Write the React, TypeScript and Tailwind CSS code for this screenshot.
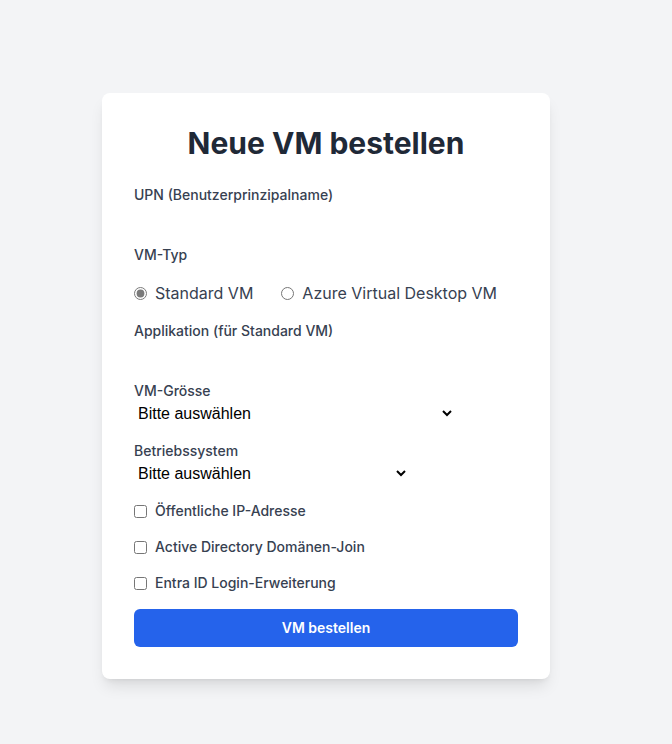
import React from "react";

export default function App() {
  const font = { fontFamily: "Inter, 'Noto Sans', sans-serif" };
  return (
    <div className="min-h-[744px] bg-[#f3f4f6] pt-[93px] pl-[102px]" style={font}>
      <div className="w-[448px] bg-white rounded-lg shadow-lg p-8">
        <h1 className="text-3xl font-bold text-[#1f2937] text-center mb-6">Neue VM bestellen</h1>

        <div className="mb-4">
          <label className="block text-sm font-medium text-[#374151]">UPN (Benutzerprinzipalname)</label>
          <input type="text" className="block w-full h-6 outline-none" />
        </div>

        <div className="mb-4">
          <label className="block text-sm font-medium text-[#374151] mb-4">VM-Typ</label>
          <div className="flex items-center text-base text-[#374151]">
            <label className="inline-flex items-center">
              <input type="radio" name="vmtyp" defaultChecked className="w-[13px] h-[13px] accent-[#7a7a7a]" />
              <span className="ml-2">Standard VM</span>
            </label>
            <label className="inline-flex items-center ml-7">
              <input type="radio" name="vmtyp" className="w-[13px] h-[13px] accent-[#7a7a7a]" />
              <span className="ml-2">Azure Virtual Desktop VM</span>
            </label>
          </div>
        </div>

        <div className="mb-4">
          <label className="block text-sm font-medium text-[#374151]">Applikation (für Standard VM)</label>
          <input type="text" className="block w-full h-6 outline-none" />
        </div>

        <div className="mb-4">
          <label className="block text-sm font-medium text-[#374151]">VM-Grösse</label>
          <select
            className="block h-6 w-[321px] text-base text-black"
            style={{ fontFamily: "'Liberation Sans', Arial, sans-serif" }}
          >
            <option>Bitte auswählen</option>
          </select>
        </div>

        <div className="mb-4">
          <label className="block text-sm font-medium text-[#374151]">Betriebssystem</label>
          <select
            className="block h-6 w-[275px] text-base text-black"
            style={{ fontFamily: "'Liberation Sans', Arial, sans-serif" }}
          >
            <option>Bitte auswählen</option>
          </select>
        </div>

        <label className="flex items-center mb-4 text-sm font-medium text-[#374151]">
          <input type="checkbox" className="w-[13px] h-[13px]" />
          <span className="ml-2">Öffentliche IP-Adresse</span>
        </label>
        <label className="flex items-center mb-4 text-sm font-medium text-[#374151]">
          <input type="checkbox" className="w-[13px] h-[13px]" />
          <span className="ml-2">Active Directory Domänen-Join</span>
        </label>
        <label className="flex items-center mb-4 text-sm font-medium text-[#374151]">
          <input type="checkbox" className="w-[13px] h-[13px]" />
          <span className="ml-2">Entra ID Login-Erweiterung</span>
        </label>

        <button className="w-full h-[38px] bg-[#2563eb] text-white text-sm font-semibold rounded-md">
          VM bestellen
        </button>
      </div>
    </div>
  );
}
